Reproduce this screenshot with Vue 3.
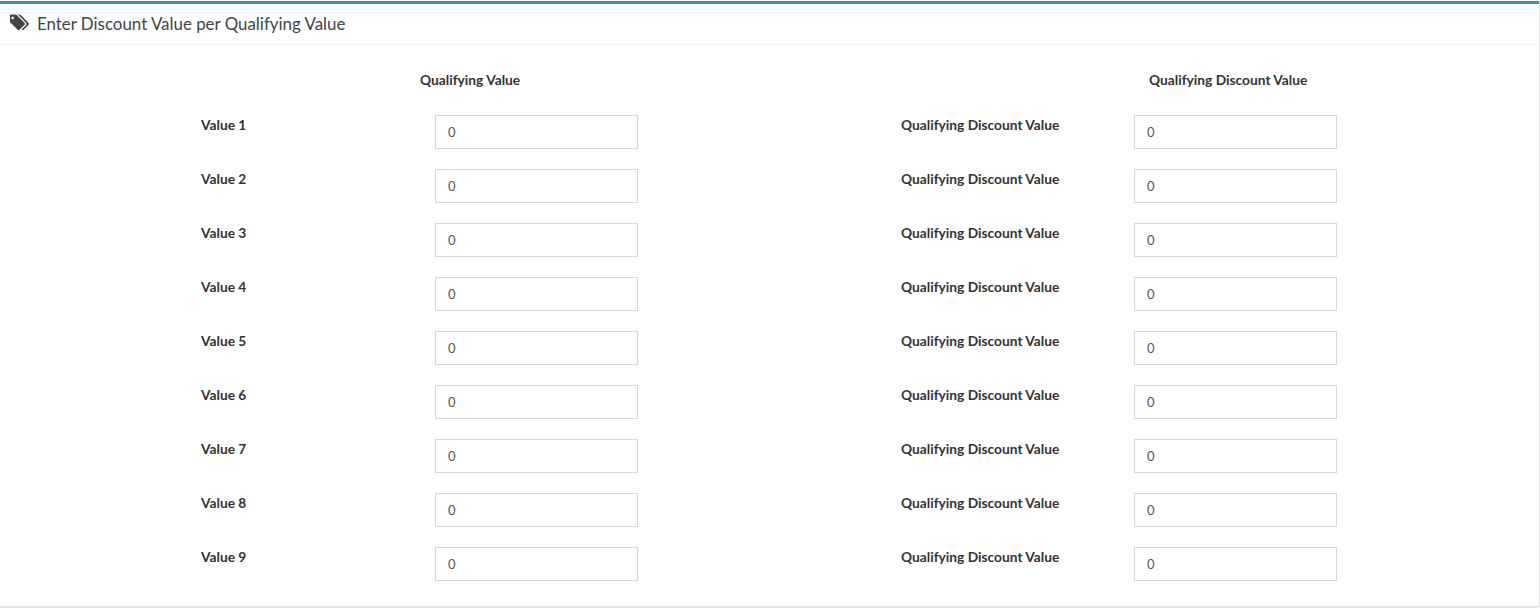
<script setup>
const rows = [1, 2, 3, 4, 5, 6, 7, 8, 9]
</script>

<template>
  <div class="box">
    <header class="box-header">
      <svg class="tags" viewBox="0 0 1835 1792" aria-hidden="true">
        <path fill="currentColor" d="M384 448q0-53-37.5-90.5t-90.5-37.5-90.5 37.5-37.5 90.5 37.5 90.5 90.5 37.5 90.5-37.5 37.5-90.5zm1067 576q0 53-37 90l-491 492q-39 37-91 37-53 0-90-37l-715-716q-38-37-64.5-101t-26.5-117v-416q0-52 38-90t90-38h416q53 0 117 26.5t102 64.5l715 714q37 39 37 91zm384 0q0 53-37 90l-491 492q-38 38-91 38-36 0-59-14t-53-45l470-470q37-37 37-90 0-52-37-91l-715-714q-38-38-102-64.5t-117-26.5h224q53 0 117 26.5t102 64.5l715 714q37 39 37 91z" />
      </svg>
      <h3 class="title">Enter Discount Value per Qualifying Value</h3>
    </header>
    <div class="box-body">
      <section class="group left">
        <div class="heading">Qualifying Value</div>
        <div v-for="n in rows" :key="n" class="row">
          <label class="label">Value {{ n }}</label>
          <input class="field" type="text" value="0" />
        </div>
      </section>
      <section class="group right">
        <div class="heading">Qualifying Discount Value</div>
        <div v-for="n in rows" :key="n" class="row">
          <label class="label">Qualifying Discount Value</label>
          <input class="field" type="text" value="0" />
        </div>
      </section>
    </div>
  </div>
</template>

<style>
html, body { margin: 0; background: #fff; }
#app { box-sizing: border-box; width: 1540px; height: 609px; padding-top: 1px; overflow: hidden; }
</style>

<style scoped>
.box {
  box-sizing: border-box;
  width: 1539px;
  height: 605px;
  background: #fff;
  border-top: 3px solid #3c8dbc;
  box-shadow: 0 2px 0 #e2e2e2, 1px 1px 0 #e2e2e2;
  font-family: "Lato", "Noto Sans", sans-serif;
  color: #333;
}
.box-header {
  box-sizing: border-box;
  height: 41px;
  display: flex;
  align-items: center;
  gap: 8px;
  padding-left: 10px;
  border-bottom: 1px solid #f4f4f4;
  color: #444;
}
.tags { width: 19px; height: 19px; flex: none; margin-bottom: 4px; }
.title { margin: 0 0 1px; font-size: 16.9px; font-weight: 400; line-height: 20px; }
.box-body { display: flex; padding: 25px 0 0 201px; }
.group { display: flex; flex-direction: column; gap: 20px; }
.left { width: 700px; }
.right { width: 436px; }
.heading { height: 20px; line-height: 20px; font-size: 13.75px; font-weight: 700; margin-bottom: 5px; }
.left .heading { padding-left: 219px; }
.right .heading { padding-left: 248px; }
.row { display: flex; align-items: flex-start; height: 34px; }
.label { line-height: 20px; font-size: 13.75px; font-weight: 700; }
.left .label { width: 234px; }
.right .label { width: 233px; }
.field {
  box-sizing: border-box;
  width: 203px;
  height: 34px;
  padding: 5px 12px;
  border: 1px solid #d2d6de;
  border-radius: 0;
  outline: none;
  background: #fff;
  color: #555;
  font: 400 13px "Lato", "Noto Sans", sans-serif;
}
</style>
